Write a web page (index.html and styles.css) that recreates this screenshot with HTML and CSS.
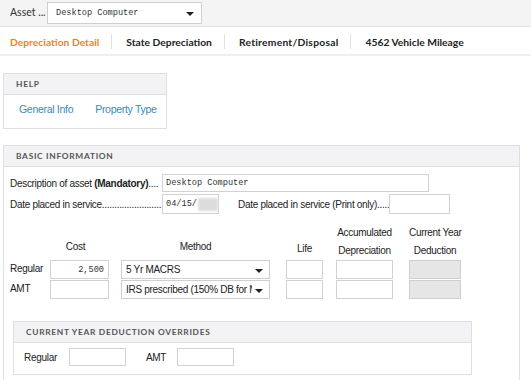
FILE: index.html
```html
<!DOCTYPE html>
<html>
<head>
<meta charset="utf-8">
<link rel="stylesheet" href="styles.css">
</head>
<body>
<div class="topbar">
  <span class="asset-label">Asset ...</span>
  <div class="select asset-select"><span class="mono">Desktop Computer</span><span class="caret"></span></div>
</div>
<div class="tabs">
  <span class="tab active">Depreciation Detail</span>
  <span class="sep"></span>
  <span class="tab">State Depreciation</span>
  <span class="sep"></span>
  <span class="tab tab-wide">Retirement/Disposal</span>
  <span class="sep"></span>
  <span class="tab">4562 Vehicle Mileage</span>
</div>

<div class="panel help">
  <div class="panel-head">HELP</div>
  <div class="help-body">
    <a class="link">General Info</a>
    <a class="link">Property Type</a>
  </div>
</div>

<div class="panel basic">
  <div class="panel-head">BASIC INFORMATION</div>
  <div class="basic-body">
    <div class="row desc-row">
      <span class="lbl">Description of asset <b>(Mandatory)</b>....</span>
      <div class="input desc-input"><span class="mono">Desktop Computer</span></div>
    </div>
    <div class="row date-row">
      <span class="lbl">Date placed in service.........................</span>
      <div class="input date-input"><span class="mono">04/15/</span><span class="redact"></span></div>
      <span class="lbl2">Date placed in service (Print only).....</span>
      <div class="input print-input"></div>
    </div>

    <div class="grid">
      <div></div>
      <div class="hd w-cost cost-hd">Cost</div>
      <div class="hd w-method">Method</div>
      <div class="hd w-life low">Life</div>
      <div class="hd w-acc two">Accumulated<br>Depreciation</div>
      <div class="hd w-ded two">Current Year<br>Deduction</div>

      <div class="rl">Regular</div>
      <div class="input w-cost num"><span class="mono">2,500</span></div>
      <div class="select w-method"><span class="clip">5 Yr MACRS</span><span class="caret"></span></div>
      <div class="input w-life"></div>
      <div class="input w-acc"></div>
      <div class="input w-ded dis"></div>

      <div class="rl">AMT</div>
      <div class="input w-cost"></div>
      <div class="select w-method"><span class="clip">IRS prescribed (150% DB for MACRS)</span><span class="caret"></span></div>
      <div class="input w-life"></div>
      <div class="input w-acc"></div>
      <div class="input w-ded dis"></div>
    </div>

    <div class="panel overrides">
      <div class="panel-head">CURRENT YEAR DEDUCTION OVERRIDES</div>
      <div class="ov-body">
        <span class="lbl">Regular</span>
        <div class="input ov-input"></div>
        <span class="lbl ov-amt">AMT</span>
        <div class="input ov-input"></div>
      </div>
    </div>
  </div>
</div>
</body>
</html>
```
FILE: styles.css
```css
* { box-sizing: border-box; }
body {
  margin: 0;
  width: 531px;
  height: 380px;
  overflow: hidden;
  background: #fff;
  font-family: "Liberation Sans", Arial, sans-serif;
  font-size: 10px;
  letter-spacing: -0.3px;
  color: #222;
}
.mono {
  font-family: "Liberation Mono", "Courier New", monospace;
  font-size: 8.6px;
  letter-spacing: 0;
  color: #333;
  white-space: nowrap;
}
.topbar {
  height: 27px;
  background: #f4f4f4;
  border-bottom: 1px solid #e3e3e3;
  display: flex;
  align-items: center;
  padding-left: 10px;
}
.asset-label {
  font-family: "Lato", sans-serif;
  font-size: 10.5px;
  letter-spacing: 0;
  color: #333;
  width: 37px;
  margin-top: -2px;
}
.select {
  background: #fff;
  border: 1px solid #cfcfcf;
  display: flex;
  align-items: center;
  justify-content: space-between;
  padding: 0 6px 0 4px;
}
.asset-select {
  width: 155px;
  height: 22px;
  padding-left: 8px;
  padding-right: 7px;
}
.caret {
  width: 0;
  height: 0;
  border-left: 4px solid transparent;
  border-right: 4px solid transparent;
  border-top: 4px solid #222;
  margin-top: 2px;
  flex: none;
}
.tabs {
  height: 29px;
  display: flex;
  align-items: center;
  padding: 2px 0 0 10px;
  border-bottom: 2px solid #f0f0f0;
}
.tab {
  font-family: "Lato", sans-serif;
  font-weight: 700;
  font-size: 10.3px;
  letter-spacing: 0;
  color: #222;
  white-space: nowrap;
}
.tab.active { color: #f58220; }
.tab-wide { letter-spacing: 0.25px; }
.sep {
  width: 1px;
  height: 15px;
  background: #e2e2e2;
  margin: 0 14px 0 12px;
}
.panel {
  border: 1px solid #dfdfe3;
  background: #fff;
}
.panel-head {
  background: #f3f3f5;
  border-bottom: 1px solid #dfdfe3;
  height: 21px;
  display: flex;
  align-items: center;
  padding-left: 12px;
  font-family: "Lato", sans-serif;
  font-weight: 700;
  font-size: 8.4px;
  letter-spacing: 0.7px;
  color: #555;
  white-space: nowrap;
}
.help {
  margin: 17px 0 0 3px;
  width: 164px;
  height: 56px;
}
.help-body {
  display: flex;
  gap: 22px;
  padding: 8px 0 0 15px;
}
.link {
  color: #2e8dc8;
  font-size: 10.5px;
  white-space: nowrap;
}
.basic {
  margin: 16px 0 0 3px;
  width: 517px;
  height: 260px;
  border-bottom: none;
}
.basic-body {
  padding: 7px 0 0 6px;
}
.row {
  display: flex;
  align-items: center;
}
.lbl {
  color: #222;
  white-space: nowrap;
}
.desc-row .lbl, .date-row .lbl {
  width: 152px;
}
.input {
  background: #fff;
  border: 1px solid #d2d2d2;
  display: flex;
  align-items: center;
  padding-left: 3px;
}
.desc-input {
  width: 267px;
  height: 18px;
}
.date-row { margin-top: 2px; }
.date-input {
  width: 57px;
  height: 20px;
}
.redact {
  display: inline-block;
  width: 22px;
  height: 13px;
  background: #dcdcdc;
  filter: blur(1.2px);
  margin-left: 1px;
}
.lbl2 { margin-left: 19px; color: #222; white-space: nowrap; }
.print-input {
  width: 61px;
  height: 20px;
}
.grid {
  display: grid;
  grid-template-columns: 40px 71px 165px 50px 73px 52px;
  row-gap: 1px;
  margin-top: 10px;
  align-items: end;
}
.hd {
  text-align: center;
  line-height: 18px;
  padding-bottom: 3px;
  color: #222;
  white-space: nowrap;
}
.hd.low { padding-bottom: 1px; }
.hd.two { padding-bottom: 0; margin-bottom: -1px; }
.cost-hd { padding-right: 8px; }
.w-cost { width: 59px; }
.w-method { width: 149px; }
.w-life { width: 37px; }
.w-acc { width: 57px; }
.w-ded { width: 52px; }
.grid .input, .grid .select { height: 19px; }
.rl {
  align-self: center;
  padding-bottom: 3px;
}
.num { justify-content: flex-end; padding-right: 4px; }
.dis { background: #e6e6e6; border-color: #cfcfcf; }
.clip {
  white-space: nowrap;
  overflow: hidden;
  width: 126px;
  color: #222;
}
.overrides {
  margin: 22px 0 0 3px;
  width: 459px;
  height: 54px;
}
.ov-body {
  display: flex;
  align-items: center;
  padding: 5px 0 0 10px;
}
.ov-input {
  width: 57px;
  height: 18px;
  margin-left: 12px;
}
.ov-amt { margin-left: 20px; }
.ov-amt + .ov-input { margin-left: 11px; }
```
